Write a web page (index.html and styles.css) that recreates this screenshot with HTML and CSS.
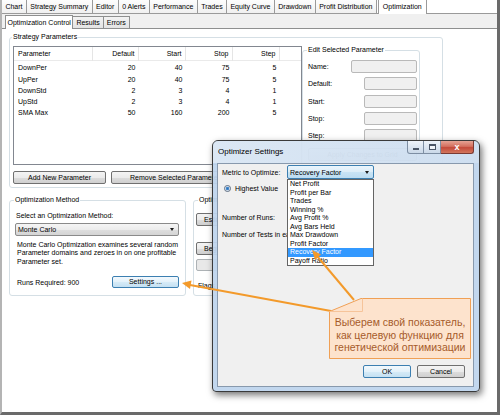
FILE: index.html
```html
<!DOCTYPE html>
<html>
<head>
<meta charset="utf-8">
<link rel="stylesheet" href="styles.css">
</head>
<body>
<div class="frame">
  <div class="tabs1">
    <div class="tab">Chart</div>
    <div class="tab">Strategy Summary</div>
    <div class="tab">Editor</div>
    <div class="tab">0 Alerts</div>
    <div class="tab">Performance</div>
    <div class="tab">Trades</div>
    <div class="tab">Equity Curve</div>
    <div class="tab">Drawdown</div>
    <div class="tab">Profit Distribution</div>
    <div class="tab sel">Optimization</div>
  </div>
  <div class="tabs2">
    <div class="tab2 sel">Optimization Control</div>
    <div class="tab2">Results</div>
    <div class="tab2">Errors</div>
  </div>
  <div class="content">
    <fieldset class="grp strat">
      <legend>Strategy Parameters</legend>
      <div class="strat-row">
        <div class="list-col">
          <div class="list">
            <div class="lrow lhead"><span class="cl">Parameter</span><span class="cr">Default</span><span class="cr">Start</span><span class="cr">Stop</span><span class="cr">Step</span><span class="cf"></span></div>
            <div class="lbody">
              <div class="lrow"><span class="cl">DownPer</span><span class="cr">20</span><span class="cr">40</span><span class="cr">75</span><span class="cr">5</span></div>
              <div class="lrow"><span class="cl">UpPer</span><span class="cr">20</span><span class="cr">40</span><span class="cr">75</span><span class="cr">5</span></div>
              <div class="lrow"><span class="cl">DownStd</span><span class="cr">2</span><span class="cr">3</span><span class="cr">4</span><span class="cr">1</span></div>
              <div class="lrow"><span class="cl">UpStd</span><span class="cr">2</span><span class="cr">3</span><span class="cr">4</span><span class="cr">1</span></div>
              <div class="lrow"><span class="cl">SMA Max</span><span class="cr">50</span><span class="cr">160</span><span class="cr">200</span><span class="cr">5</span></div>
            </div>
          </div>
          <div class="btn-row">
            <div class="btn add">Add New Parameter</div>
            <div class="btn rem">Remove Selected Parameter</div>
          </div>
        </div>
        <fieldset class="grp edit">
          <legend>Edit Selected Parameter</legend>
          <div class="frow"><span>Name:</span><span class="inp wide"></span></div>
          <div class="frow"><span>Default:</span><span class="inp"></span></div>
          <div class="frow"><span>Start:</span><span class="inp"></span></div>
          <div class="frow"><span>Stop:</span><span class="inp"></span></div>
          <div class="frow"><span>Step:</span><span class="inp"></span></div>
          <div class="btn apply">Apply Changes to Grid</div>
        </fieldset>
      </div>
    </fieldset>
    <div class="lower">
      <fieldset class="grp method">
        <legend>Optimization Method</legend>
        <div class="sel-label">Select an Optimization Method:</div>
        <div class="combo gray"><span>Monte Carlo</span><span class="arrow"></span></div>
        <div class="desc">Monte Carlo Optimization examines several random<br>Parameter domains and zeroes in on one profitable<br>Parameter set.</div>
        <div class="runs-row"><span class="runs">Runs Required: 900</span><div class="btn focus settings">Settings ...</div></div>
      </fieldset>
      <fieldset class="grp prog">
        <legend>Optimization Progress</legend>
        <div class="btn pbtn first">Estimate</div>
        <div class="btn pbtn second">Begin</div>
        <div class="btn pbtn third"></div>
        <div class="flags">Flags</div>
      </fieldset>
    </div>
  </div>
</div>

<div class="dialog">
  <div class="titlebar">Optimizer Settings</div>
  <div class="winbtns">
    <span class="wb min"><span class="minbar"></span></span><span class="wb max"><span class="maxbox"></span></span><span class="wb close">x</span>
  </div>
  <div class="client">
    <div class="drow1">
      <span class="mlabel">Metric to Optimize:</span>
      <div class="combo blue">
        <span>Recovery Factor</span><span class="arrow"></span>
        <div class="dropdown">
          <div class="ditem">Net Profit</div>
          <div class="ditem">Profit per Bar</div>
          <div class="ditem">Trades</div>
          <div class="ditem">Winning %</div>
          <div class="ditem">Avg Profit %</div>
          <div class="ditem">Avg Bars Held</div>
          <div class="ditem">Max Drawdown</div>
          <div class="ditem">Profit Factor</div>
          <div class="ditem hl">Recovery Factor</div>
          <div class="ditem">Payoff Ratio</div>
        </div>
      </div>
    </div>
    <div class="drow2"><span class="radio"></span><span class="rtext">Highest Value</span></div>
    <div class="drow3">Number of Runs:</div>
    <div class="drow4">Number of Tests in each</div>
    <div class="dbtns">
      <div class="btn focus dbtn">OK</div>
      <div class="btn dbtn">Cancel</div>
    </div>
  </div>
</div>

<svg class="anno" width="500" height="415" viewBox="0 0 500 415">
  <line x1="354" y1="300" x2="317" y2="256" stroke="#f39a2b" stroke-width="2"/>
  <polygon points="312,250 321,254.5 315,260" fill="#f39a2b"/>
  <line x1="331" y1="311" x2="190" y2="285" stroke="#f39a2b" stroke-width="2"/>
  <polygon points="182,283 191.5,280.5 190,289" fill="#f39a2b"/>
  <polygon points="329.5,311.5 361,298.5 470.5,298.5 470.5,358.5 329.5,358.5" fill="#fde3cd" stroke="#f0a055" stroke-width="1"/>
  <polyline points="329.5,311.5 362.5,311.5 362.5,298.5" fill="none" stroke="#f6c49a" stroke-width="1"/>
</svg>
<div class="callout">Выберем свой показатель,<br>как целевую функцию для<br>генетической оптимизации</div>
</body>
</html>
```

FILE: styles.css
```css
* { box-sizing: border-box; }
html, body { margin: 0; padding: 0; }
body {
  position: relative;
  width: 500px;
  height: 415px;
  overflow: hidden;
  background: #fff;
  font-family: "Liberation Sans", Arial, sans-serif;
  font-size: 7px;
  color: #000;
}
.frame {
  width: 500px;
  height: 415px;
  border-left: 2px solid #b4b4b4;
  border-right: 3px solid #6a6a6a;
  border-bottom: 3px solid #6a6a6a;
  display: flex;
  flex-direction: column;
  background: #fff;
}

/* top tab row */
.tabs1 {
  flex: none;
  display: flex;
  height: 14px;
  border-bottom: 1px solid #9a9a9a;
  background: #fff;
}
.tab {
  padding: 0 3.4px;
  line-height: 13px;
  white-space: nowrap;
  border-right: 1px solid #9a9a9a;
  background: linear-gradient(#fdfdfd, #f0f0f0);
}
.tab.sel {
  position: relative;
  z-index: 1;
  height: 14px;
  margin-left: 1px;
  margin-bottom: -1px;
  padding: 0 4px;
  border-left: 1px solid #9a9a9a;
  background: #fff;
}

/* second tab row */
.tabs2 {
  flex: none;
  display: flex;
  align-items: flex-end;
  height: 14px;
  padding-left: 3px;
  background: #f0f0f0;
}
.tab2 {
  line-height: 11px;
  padding: 0 3px;
  white-space: nowrap;
  border: 1px solid #8e8f8f;
  border-bottom: none;
  margin-left: -1px;
  background: linear-gradient(#f3f3f3, #e3e3e3);
}
.tab2.sel {
  position: relative;
  z-index: 1;
  margin-left: 0;
  margin-bottom: -1px;
  line-height: 13px;
  padding: 0 1.5px;
  background: #fff;
}

.content {
  flex: 1;
  border-top: 1px solid #8e8f8f;
  padding: 4px 0 0 7px;
}

fieldset.grp {
  margin: 0;
  min-width: 0;
  border: 1px solid #d5dfe5;
  border-radius: 3px;
}
fieldset.grp legend {
  padding: 0 1px;
  line-height: 8px;
  white-space: nowrap;
}

/* strategy parameters */
.strat {
  width: 434px;
  padding: 5px 3px 3px 3px;
}
.strat legend { margin-left: -1px; }
.strat-row { display: flex; align-items: flex-start; }
.list-col { width: 289px; flex: none; }
.list {
  height: 119px;
  border: 1px solid #828790;
  background: #fff;
}
.lrow {
  display: grid;
  grid-template-columns: 79px 46px 47px 47px 47px;
  height: 11.3px;
  line-height: 11.3px;
}
.lhead {
  grid-template-columns: 79px 46px 47px 47px 47px 1fr;
  height: 14px;
  line-height: 14px;
  border-bottom: 1px solid #eaeaea;
}
.lhead span { border-right: 1px solid #e5e5e5; }
.lhead .cf { border-right: none; }
.lbody { padding-top: 1.3px; }
.cl { padding-left: 4px; }
.cr { text-align: right; padding-right: 3.5px; }

.btn-row { display: flex; gap: 5px; margin-top: 6px; }
.btn {
  height: 13px;
  line-height: 11px;
  text-align: center;
  white-space: nowrap;
  border: 1px solid #707070;
  border-radius: 2px;
  background: linear-gradient(#f4f4f4 0%, #ebebeb 50%, #dddddd 51%, #cfcfcf 100%);
}
.btn.focus {
  border-color: #3c7fb1;
  background: linear-gradient(#f3f9fd 0%, #e3f1fa 50%, #d6ebf7 51%, #c4e0f2 100%);
}
.add { width: 93px; }
.rem { width: 128px; }

.edit {
  flex: none;
  width: 118px;
  margin-left: auto;
  margin-right: 13px;
  margin-top: -1px;
  padding: 6px 2px 4px 5px;
}
.edit legend { margin-left: -1px; }
.frow {
  display: flex;
  justify-content: space-between;
  align-items: center;
  height: 13px;
  margin-bottom: 4.25px;
}
.inp {
  width: 53px;
  height: 13px;
  border: 1px solid #b9b9b9;
  border-radius: 2px;
  background: #f0f0f0;
}
.inp.wide { width: 66px; }
.apply { margin-top: 6px; }

/* lower groups */
.lower { display: flex; gap: 7px; margin-top: 8px; }
.method {
  width: 177px;
  padding: 7.5px 6px 5px 5px;
}
.method legend { margin-left: -1px; }
.sel-label { line-height: 8.5px; padding-left: 1px; }
.combo {
  position: relative;
  display: flex;
  align-items: center;
  justify-content: space-between;
  height: 13px;
  padding: 0 4px 0 2px;
  border-radius: 2px;
}
.combo.gray {
  margin-top: 3px;
  border: 1px solid #8a8a8a;
  background: linear-gradient(#f5f5f5 0%, #ececec 50%, #dedede 51%, #d4d4d4 100%);
}
.arrow {
  width: 0;
  height: 0;
  border-left: 2.5px solid transparent;
  border-right: 2.5px solid transparent;
  border-top: 3px solid #1a1a1a;
}
.desc {
  margin-top: 4.5px;
  line-height: 8.7px;
  padding-left: 2px;
  white-space: nowrap;
}
.runs-row {
  display: flex;
  justify-content: space-between;
  align-items: center;
  margin-top: 9.4px;
  padding-left: 2px;
}
.settings { width: 67px; height: 12px; line-height: 10px; }

.prog {
  width: 150px;
  padding: 9px 4px 5px 2px;
}
.prog legend { margin-left: 2px; }
.pbtn { width: fit-content; padding: 0 7px; }
.pbtn.second { margin-top: 16px; }
.pbtn.third {
  width: 60px;
  margin-top: 4px;
  height: 12px;
  border-color: #adb2b5;
  background: #e8e8e8;
}
.flags { margin-top: 11px; line-height: 8px; padding-left: 2px; }

/* dialog */
.dialog {
  position: absolute;
  left: 212px;
  top: 140px;
  width: 268px;
  height: 252px;
  z-index: 5;
  display: flex;
  flex-direction: column;
  padding: 0 5px 4px 4px;
  border: 1px solid #3a3a3a;
  border-radius: 6px 6px 4px 4px;
  background: rgba(190, 213, 237, 0.94);
  box-shadow: 2px 3px 7px rgba(0, 0, 0, 0.55);
}
.dialog::before {
  content: "";
  position: absolute;
  left: 0;
  top: 0;
  right: 0;
  height: 22px;
  border-radius: 5px 5px 0 0;
  background: linear-gradient(90deg, rgba(236, 242, 248, 0.6), rgba(222, 232, 243, 0.45));
  pointer-events: none;
}
.titlebar {
  position: relative;
  z-index: 1;
  flex: none;
  height: 22px;
  line-height: 22px;
  padding-left: 1px;
  font-size: 8px;
  color: #000;
}
.winbtns {
  position: absolute;
  z-index: 2;
  top: 0;
  right: 5px;
  display: flex;
  height: 13px;
}
.wb {
  display: flex;
  align-items: center;
  justify-content: center;
  height: 13px;
  border: 1px solid #7d8ea3;
  border-top: none;
}
.wb.min {
  width: 17px;
  border-radius: 0 0 0 3px;
  background: linear-gradient(rgba(245, 248, 252, 0.8), rgba(200, 214, 230, 0.8));
}
.wb.max {
  width: 17px;
  border-left: none;
  background: linear-gradient(rgba(245, 248, 252, 0.8), rgba(200, 214, 230, 0.8));
}
.wb.close {
  width: 33px;
  border-left: none;
  border-color: #7a3a33;
  border-radius: 0 0 3px 0;
  color: #fff;
  font-weight: bold;
  font-size: 9px;
  line-height: 11px;
  background: linear-gradient(#e6a394 0%, #d4705f 45%, #c44a3a 55%, #d2765d 100%);
}
.minbar {
  width: 6px;
  height: 2px;
  margin-top: 4px;
  background: #fff;
  border: 0.5px solid #4a5566;
}
.maxbox {
  width: 7px;
  height: 6px;
  border: 1px solid #4a5566;
  border-top-width: 2px;
  background: rgba(255, 255, 255, 0.6);
}
.client {
  position: relative;
  z-index: 1;
  flex: 1;
  display: flex;
  flex-direction: column;
  padding: 1px 8px 8px 4px;
  border: 1px solid #8899ad;
  background: #f0f0f0;
}
.drow1 { display: flex; align-items: center; }
.mlabel { width: 65px; flex: none; }
.combo.blue {
  width: 87px;
  height: 14px;
  border: 1px solid #3c7fb1;
  background: linear-gradient(#eaf5fc 0%, #dcedf8 50%, #c9e4f5 51%, #bcdcf1 100%);
}
.dropdown {
  position: absolute;
  left: -1px;
  top: 13px;
  width: 87px;
  height: 87px;
  z-index: 2;
  border: 1px solid #646464;
  background: #fff;
}
.ditem {
  height: 8.5px;
  line-height: 8.5px;
  padding-left: 2px;
  white-space: nowrap;
}
.ditem.hl { background: #3399ff; color: #fff; }
.drow2 { display: flex; align-items: center; height: 8px; margin-top: 5px; }
.radio {
  width: 7px;
  height: 7px;
  margin-left: 2px;
  border-radius: 50%;
  border: 1px solid #5d6d82;
  background: radial-gradient(circle, #2b6fb6 0, #4c8fd1 1.4px, #e9eef4 2.2px);
}
.rtext { margin-left: 4px; }
.drow3 { margin-top: 22px; line-height: 8px; }
.drow4 { margin-top: 9px; line-height: 8px; white-space: nowrap; }
.dbtns {
  margin-top: auto;
  display: flex;
  justify-content: flex-end;
  gap: 6px;
}
.dbtn { width: 48px; }

/* annotation */
.anno {
  position: absolute;
  left: 0;
  top: 0;
  z-index: 6;
  pointer-events: none;
}
.callout {
  position: absolute;
  left: 329px;
  top: 311px;
  width: 142px;
  height: 48px;
  z-index: 7;
  display: flex;
  align-items: center;
  justify-content: center;
  text-align: center;
  font-size: 10.5px;
  line-height: 12.5px;
  color: #a65b2b;
  white-space: nowrap;
}
```
